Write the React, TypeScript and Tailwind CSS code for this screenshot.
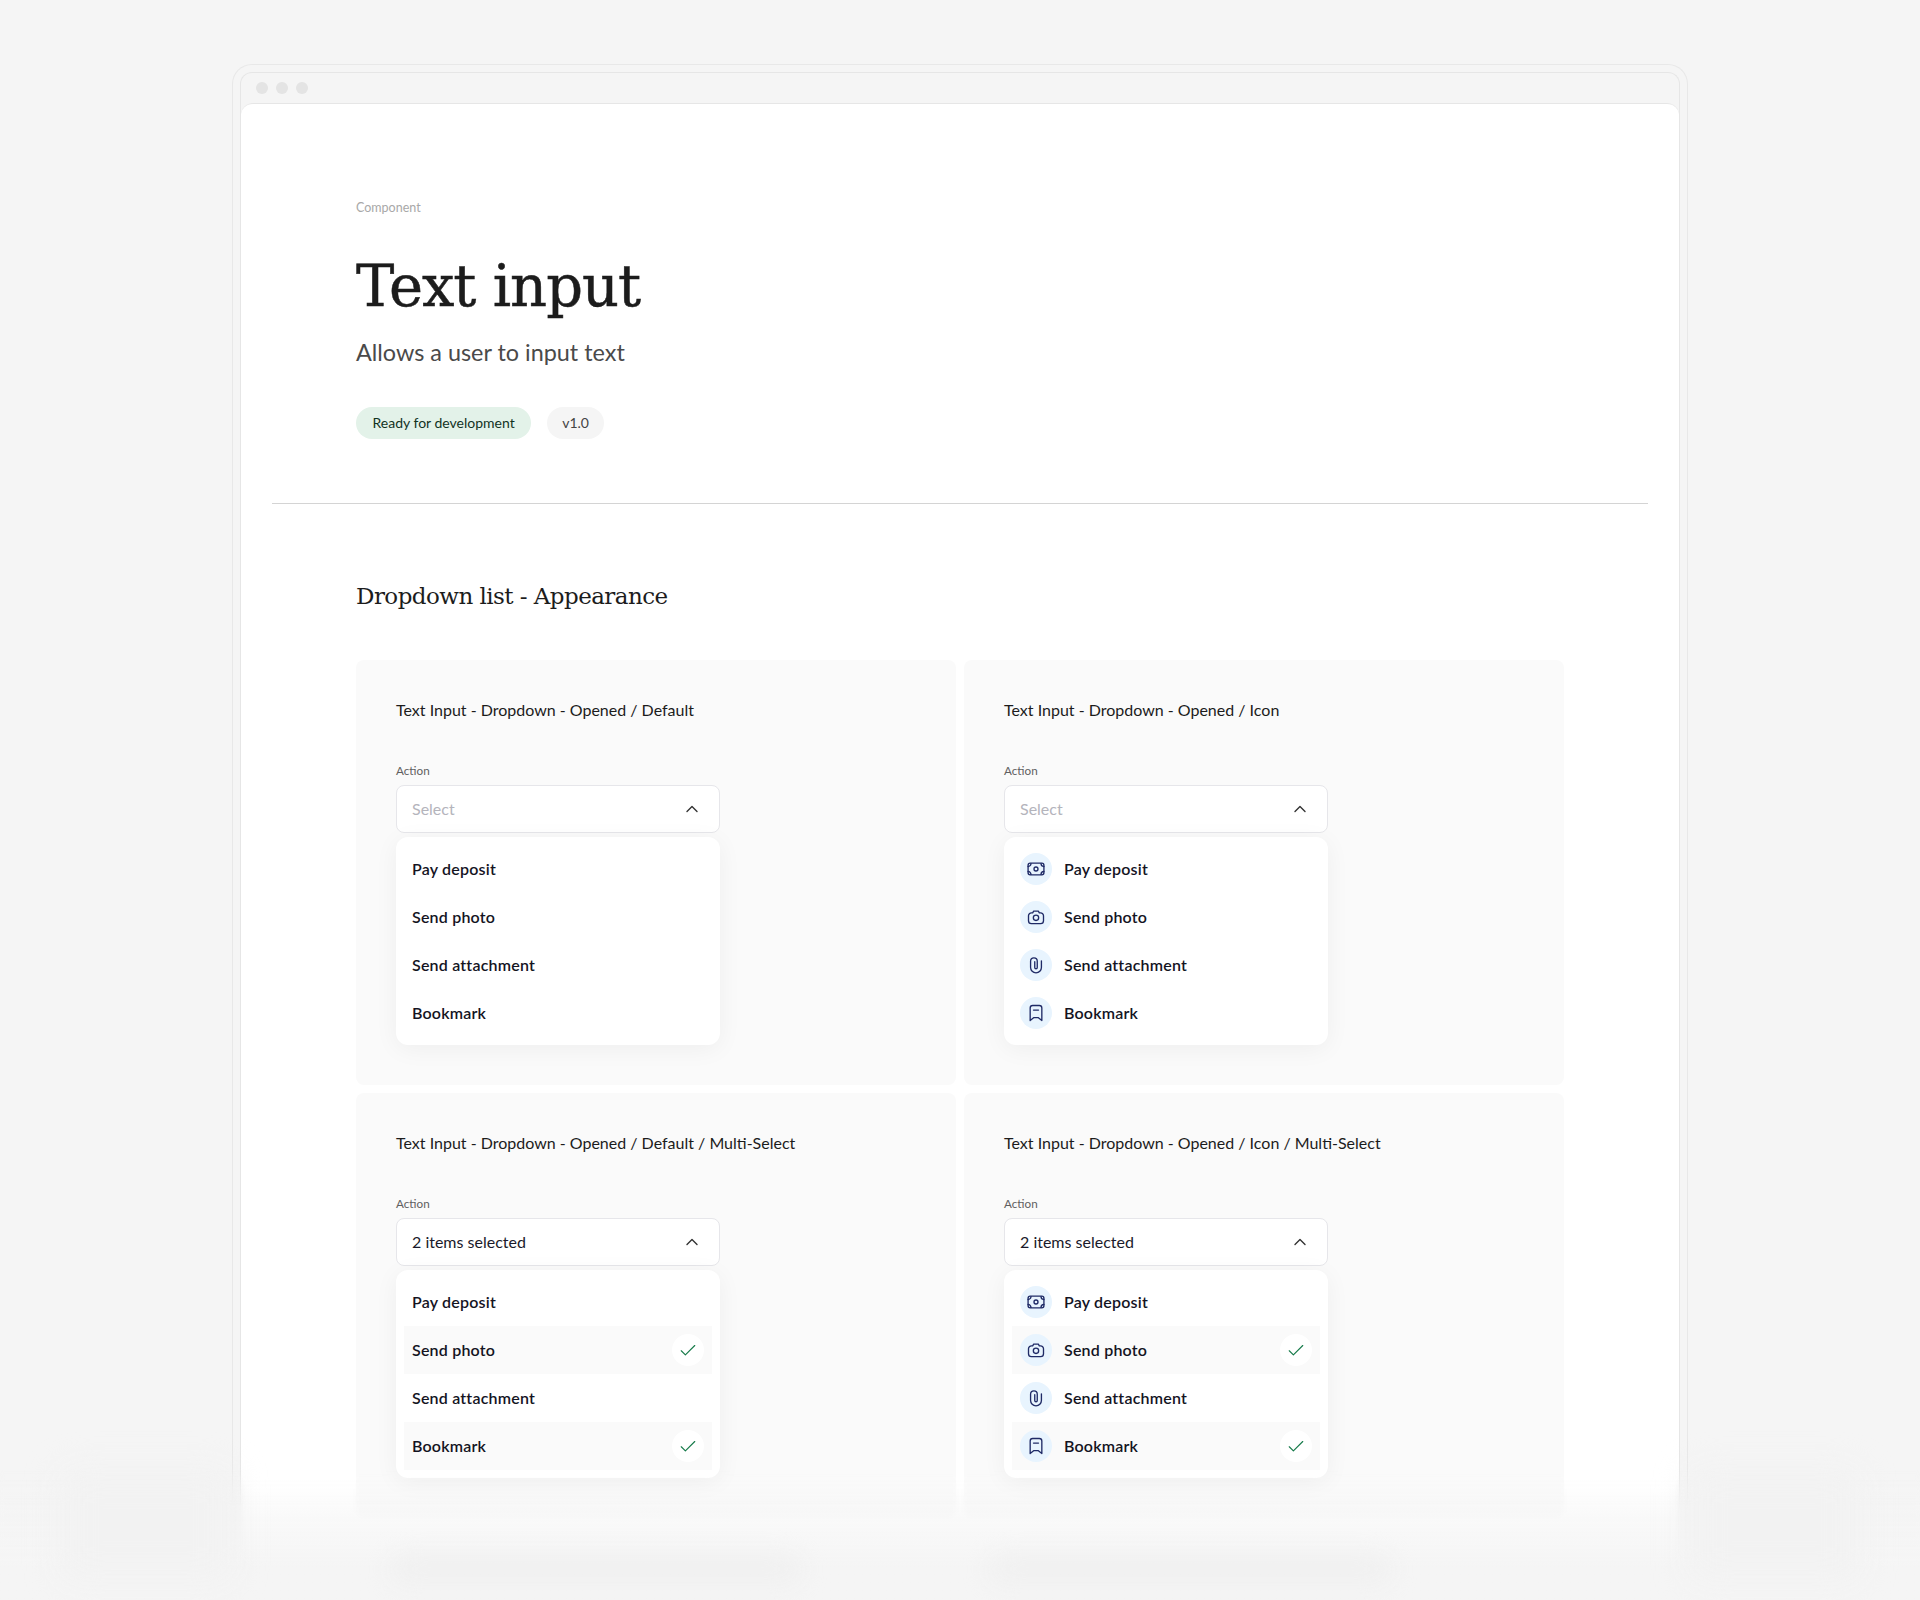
import { ReactNode } from "react";

const ITEMS = ["Pay deposit", "Send photo", "Send attachment", "Bookmark"];

function PayIcon() {
  return (
    <svg width="20" height="20" viewBox="0 0 24 24" fill="none" stroke="#1f2a66" strokeWidth="1.6" strokeLinecap="round" strokeLinejoin="round">
      <rect x="2.5" y="5" width="19" height="14" rx="2.5" />
      <circle cx="12" cy="12" r="2.4" />
      <path d="M2.5 9A3.5 3.5 0 0 0 6 5.5M18 5.5A3.5 3.5 0 0 0 21.5 9M2.5 15A3.5 3.5 0 0 1 6 18.5M18 18.5A3.5 3.5 0 0 1 21.5 15" />
    </svg>
  );
}

function CameraIcon() {
  return (
    <svg width="20" height="20" viewBox="0 0 24 24" fill="none" stroke="#1f2a66" strokeWidth="1.6" strokeLinecap="round" strokeLinejoin="round">
      <path d="M3 10.5A3.5 3.5 0 0 1 6.5 7H8l1.2-2h5.6L16 7h1.5A3.5 3.5 0 0 1 21 10.5v6a3.5 3.5 0 0 1-3.5 3.5h-11A3.5 3.5 0 0 1 3 16.5z" />
      <circle cx="12" cy="13" r="3.2" />
    </svg>
  );
}

function ClipIcon() {
  return (
    <svg width="20" height="20" viewBox="0 0 24 24" fill="none" stroke="#1f2a66" strokeWidth="1.6" strokeLinecap="round" strokeLinejoin="round">
      <path d="M18.5 7v8a6.5 6.5 0 0 1-13 0V7.5a4 4 0 0 1 8 0V15a1.5 1.5 0 0 1-3 0V8" />
    </svg>
  );
}

function BookmarkIcon() {
  return (
    <svg width="20" height="20" viewBox="0 0 24 24" fill="none" stroke="#1f2a66" strokeWidth="1.6" strokeLinecap="round" strokeLinejoin="round">
      <path d="M5 6a3 3 0 0 1 3-3h8a3 3 0 0 1 3 3v15l-4.5-3.5h-5L5 21z" />
      <path d="M9 8.5h6" />
    </svg>
  );
}

const ICONS: ReactNode[] = [<PayIcon />, <CameraIcon />, <ClipIcon />, <BookmarkIcon />];

function Check() {
  return (
    <span className="flex h-8 w-8 items-center justify-center rounded-full bg-white">
      <svg width="18" height="18" viewBox="0 0 24 24" fill="none" stroke="#157a49" strokeWidth="1.5" strokeLinecap="round" strokeLinejoin="round">
        <path d="M3 13l5.5 5.5L21 6" />
      </svg>
    </span>
  );
}

function DropdownCard({ title, icons, multi }: { title: string; icons?: boolean; multi?: boolean }) {
  return (
    <div className="h-[425px] rounded-lg bg-[#fafafa] px-10 pt-10">
      <p className="text-base leading-5 text-[#1c1c1c]">{title}</p>
      <p className="mt-[42px] text-[11.7px] leading-4 text-[#5f5f5f]">Action</p>
      <div className="mt-[7px] w-[324px]">
        <div className="flex h-12 items-center justify-between rounded-lg border border-[#e6e6ea] bg-white pl-[15px] pr-[20px]">
          <span className={multi ? "text-base text-[#1a1a2a]" : "text-base text-[#b4b4bc]"}>
            {multi ? "2 items selected" : "Select"}
          </span>
          <svg width="14" height="14" viewBox="0 0 14 14" fill="none" stroke="#333" strokeWidth="1.4" strokeLinecap="round" strokeLinejoin="round">
            <path d="M2 9.5L7 4.5L12 9.5" />
          </svg>
        </div>
        <div className="mt-1 rounded-xl bg-white p-2 shadow-[0_4px_24px_rgba(0,0,0,0.05)]">
          {ITEMS.map((item, i) => {
            const selected = multi && i % 2 === 1;
            return (
              <div key={item} className={selected ? "flex h-12 items-center bg-[#fafafa] px-2" : "flex h-12 items-center px-2"}>
                {icons && (
                  <span className="mr-3 flex h-8 w-8 items-center justify-center rounded-full bg-[#e8f4fe]">{ICONS[i]}</span>
                )}
                <span className="text-base font-semibold tracking-[0.2px] text-[#14141f]">{item}</span>
                {selected && (
                  <span className="ml-auto">
                    <Check />
                  </span>
                )}
              </div>
            );
          })}
        </div>
      </div>
    </div>
  );
}

export default function App() {
  return (
    <div className="relative h-[1600px] overflow-hidden bg-[#f5f5f5] font-['Lato',sans-serif]">
      <div className="ml-[232px] mt-16 h-[1600px] w-[1456px] rounded-t-[20px] border border-b-0 border-[#e8e8e8] px-[7px] pt-[7px]">
        <div className="h-full rounded-t-xl border border-b-0 border-[#e6e6e6]">
          <div className="flex h-[30px] items-center gap-2 pb-[1px] pl-[15px]">
            <span className="h-3 w-3 rounded-full bg-[#e4e4e4]" />
            <span className="h-3 w-3 rounded-full bg-[#e4e4e4]" />
            <span className="h-3 w-3 rounded-full bg-[#e4e4e4]" />
          </div>
          <div className="h-full rounded-t-xl border-t border-[#e6e6e6] bg-white px-[31px]">
            <div className="border-b border-[#d4d4d4] pb-[64px] pl-[84px] pt-[96px]">
              <p className="text-[12.5px] leading-4 text-[#a8a8a8]">Component</p>
              <h1 className="mt-[35px] font-['DejaVu_Serif',serif] text-[57.5px] leading-[72px] tracking-[-1px] text-[#1c1c1c] [-webkit-text-stroke:0.5px_#1c1c1c]">Text input</h1>
              <p className="mt-[13px] text-[23.4px] leading-8 text-[#4a4a4a]">Allows a user to input text</p>
              <div className="mt-[39px] flex gap-4">
                <span className="flex h-8 items-center rounded-full bg-[#e3f2e9] px-[16.5px] pb-[1px] text-[14px] text-[#12331f]">Ready for development</span>
                <span className="flex h-8 items-center rounded-full bg-[#f5f5f5] px-[15px] pb-[1px] text-[14px] text-[#444]">v1.0</span>
              </div>
            </div>
            <div className="px-[84px]">
              <h2 className="mt-[74px] font-['DejaVu_Serif',serif] text-[23px] leading-9 tracking-[-0.55px] text-[#1c1c1c]">Dropdown list - Appearance</h2>
              <div className="mt-[46px] grid grid-cols-2 gap-2">
                <DropdownCard title="Text Input - Dropdown - Opened / Default" />
                <DropdownCard title="Text Input - Dropdown - Opened / Icon" icons />
                <DropdownCard title="Text Input - Dropdown - Opened / Default / Multi-Select" multi />
                <DropdownCard title="Text Input - Dropdown - Opened / Icon / Multi-Select" icons multi />
              </div>
            </div>
          </div>
        </div>
      </div>
      {/* bottom fade */}
      <div className="absolute bottom-0 left-0 h-[130px] w-full bg-gradient-to-b from-[#f5f5f500] via-[#f5f5f599] via-40% to-[#f5f5f5] to-75% backdrop-blur-[2px] [mask-image:linear-gradient(to_bottom,transparent,black_30%)]" />
      <div className="absolute bottom-[19px] left-[392px] h-6 w-[408px] rounded-full bg-[#efefef] blur-md" />
      <div className="absolute bottom-[19px] left-[990px] h-6 w-[400px] rounded-full bg-[#efefef] blur-md" />
      <div className="absolute bottom-[20px] left-[60px] h-[110px] w-[172px] rounded-2xl bg-[#f2f2f2] blur-lg" />
      <div className="absolute bottom-[20px] right-[60px] h-[110px] w-[171px] rounded-2xl bg-[#f2f2f2] blur-lg" />
    </div>
  );
}
